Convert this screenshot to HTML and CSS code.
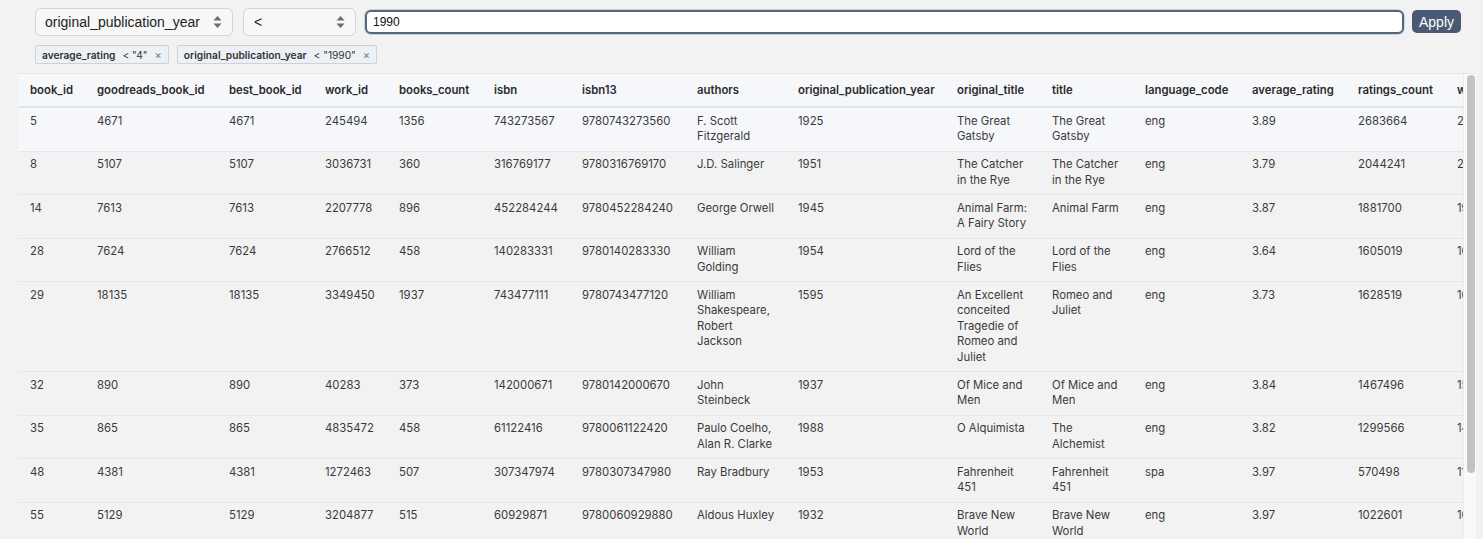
FILE: index.html
```html
<!DOCTYPE html>
<html lang="en">
<head>
<meta charset="utf-8">
<title>Books</title>
<link rel="stylesheet" href="styles.css">
</head>
<body>
<div class="toolbar">
  <div class="select sel-col"><span>original_publication_year</span><svg class="arrows" width="9" height="14" viewBox="0 0 9 14"><path d="M4.5 1 L8.5 5.5 L0.5 5.5 Z M4.5 13 L8.5 8.5 L0.5 8.5 Z" fill="#6b6b6b"/></svg></div>
  <div class="select sel-op"><span>&lt;</span><svg class="arrows" width="9" height="14" viewBox="0 0 9 14"><path d="M4.5 1 L8.5 5.5 L0.5 5.5 Z M4.5 13 L8.5 8.5 L0.5 8.5 Z" fill="#6b6b6b"/></svg></div>
  <div class="input">1990</div>
  <button class="apply">Apply</button>
</div>
<div class="tags">
  <span class="tag"><b>average_rating</b><span class="op">&lt; "4"</span><span class="x">×</span></span>
  <span class="tag"><b>original_publication_year</b><span class="op">&lt; "1990"</span><span class="x">×</span></span>
</div>
<div class="table-wrap">
<div class="scroller">
<table>
<colgroup>
<col style="width:67px"><col style="width:132px"><col style="width:96px"><col style="width:74px"><col style="width:95px"><col style="width:88px"><col style="width:115px"><col style="width:101px"><col style="width:159px"><col style="width:95px"><col style="width:93px"><col style="width:107px"><col style="width:106px"><col style="width:99px"><col style="width:150px"><col style="width:190px"><col style="width:90px"><col style="width:90px">
</colgroup>
<thead>
<tr><th>book_id</th><th>goodreads_book_id</th><th>best_book_id</th><th>work_id</th><th>books_count</th><th>isbn</th><th>isbn13</th><th>authors</th><th>original_publication_year</th><th>original_title</th><th>title</th><th>language_code</th><th>average_rating</th><th>ratings_count</th><th>work_ratings_count</th><th>work_text_reviews_count</th><th>ratings_1</th><th>ratings_2</th></tr>
</thead>
<tbody>
<tr class="hl"><td>5</td><td>4671</td><td>4671</td><td>245494</td><td>1356</td><td>743273567</td><td>9780743273560</td><td class="author">F. Scott Fitzgerald</td><td>1925</td><td>The Great Gatsby</td><td>The Great Gatsby</td><td>eng</td><td>3.89</td><td>2683664</td><td>2773745</td><td>51992</td><td>86236</td><td>197621</td></tr>
<tr><td>8</td><td>5107</td><td>5107</td><td>3036731</td><td>360</td><td>316769177</td><td>9780316769170</td><td class="author">J.D. Salinger</td><td>1951</td><td>The Catcher in the Rye</td><td>The Catcher in the Rye</td><td>eng</td><td>3.79</td><td>2044241</td><td>2120637</td><td>44920</td><td>109383</td><td>185520</td></tr>
<tr><td>14</td><td>7613</td><td>7613</td><td>2207778</td><td>896</td><td>452284244</td><td>9780452284240</td><td class="author">George Orwell</td><td>1945</td><td>Animal Farm: A Fairy Story</td><td>Animal Farm</td><td>eng</td><td>3.87</td><td>1881700</td><td>1982987</td><td>35472</td><td>66854</td><td>135147</td></tr>
<tr><td>28</td><td>7624</td><td>7624</td><td>2766512</td><td>458</td><td>140283331</td><td>9780140283330</td><td class="author">William Golding</td><td>1954</td><td>Lord of the Flies</td><td>Lord of the Flies</td><td>eng</td><td>3.64</td><td>1605019</td><td>1671484</td><td>26886</td><td>92779</td><td>160295</td></tr>
<tr><td>29</td><td>18135</td><td>18135</td><td>3349450</td><td>1937</td><td>743477111</td><td>9780743477120</td><td class="author">William Shakespeare, Robert Jackson</td><td>1595</td><td>An Excellent conceited Tragedie of Romeo and Juliet</td><td>Romeo and Juliet</td><td>eng</td><td>3.73</td><td>1628519</td><td>1672889</td><td>14778</td><td>57980</td><td>153179</td></tr>
<tr><td>32</td><td>890</td><td>890</td><td>40283</td><td>373</td><td>142000671</td><td>9780142000670</td><td class="author">John Steinbeck</td><td>1937</td><td>Of Mice and Men</td><td>Of Mice and Men</td><td>eng</td><td>3.84</td><td>1467496</td><td>1518741</td><td>24642</td><td>46630</td><td>110856</td></tr>
<tr><td>35</td><td>865</td><td>865</td><td>4835472</td><td>458</td><td>61122416</td><td>9780061122420</td><td class="author">Paulo Coelho, Alan R. Clarke</td><td>1988</td><td>O Alquimista</td><td>The Alchemist</td><td>eng</td><td>3.82</td><td>1299566</td><td>1403995</td><td>55781</td><td>74846</td><td>123614</td></tr>
<tr><td>48</td><td>4381</td><td>4381</td><td>1272463</td><td>507</td><td>307347974</td><td>9780307347980</td><td class="author">Ray Bradbury</td><td>1953</td><td>Fahrenheit 451</td><td>Fahrenheit 451</td><td>spa</td><td>3.97</td><td>570498</td><td>1176240</td><td>30694</td><td>28366</td><td>64289</td></tr>
<tr><td>55</td><td>5129</td><td>5129</td><td>3204877</td><td>515</td><td>60929871</td><td>9780060929880</td><td class="author">Aldous Huxley</td><td>1932</td><td>Brave New World</td><td>Brave New World</td><td>eng</td><td>3.97</td><td>1022601</td><td>1078000</td><td>21979</td><td>23902</td><td>59463</td></tr>
<tr><td>67</td><td>1934</td><td>1934</td><td>3244642</td><td>1705</td><td>451529308</td><td>9780451529300</td><td class="author">Louisa May Alcott</td><td>1868</td><td>Little Women</td><td>Little Women</td><td>eng</td><td>3.99</td><td>1257121</td><td>1314293</td><td>17090</td><td>28745</td><td>64295</td></tr>
</tbody>
</table>
</div>
<div class="vscroll"><div class="thumb"></div></div>
</div>
</body>
</html>
```
FILE: styles.css
```css
html, body {
  margin: 0;
  padding: 0;
  background: #f2f2f2;
  overflow: hidden;
  height: 100%;
}
body {
  font-family: Inter, "Noto Sans", sans-serif;
  color: #333;
}
.toolbar {
  display: flex;
  align-items: center;
  padding: 8px 22px 0 35px;
  height: 28px;
}
.select {
  box-sizing: border-box;
  height: 28px;
  display: flex;
  align-items: center;
  justify-content: space-between;
  background: #f7f7f7;
  border: 1px solid #d4d4d4;
  border-radius: 6px;
  font-family: "Liberation Sans", Arial, sans-serif;
  font-size: 14px;
  color: #222;
  padding: 0 10px 0 9px;
}
.sel-col { width: 198px; margin-right: 10px; }
.sel-op { width: 113px; margin-right: 9px; padding-left: 10px; }
.arrows { flex: none; }
.input {
  box-sizing: border-box;
  flex: 1;
  height: 24px;
  border: 2px solid #55657b;
  border-radius: 6px;
  box-shadow: 0 0 0 1px #cbd1d9;
  background: #fff;
  font-family: "Liberation Sans", Arial, sans-serif;
  font-size: 12px;
  color: #111;
  padding: 0 6px;
  display: flex;
  align-items: center;
  margin-right: 8px;
}
.apply {
  box-sizing: border-box;
  height: 23px;
  width: 49px;
  border: none;
  border-radius: 5px;
  background: #4a5a73;
  color: #fff;
  font-family: "Liberation Sans", Arial, sans-serif;
  font-size: 14px;
  padding: 0;
  margin-top: -1px;
}
.tags {
  display: flex;
  gap: 8px;
  padding: 9px 0 0 35px;
  height: 19px;
}
.tag {
  box-sizing: border-box;
  height: 19px;
  display: flex;
  align-items: center;
  background: #edf1f5;
  border: 1px solid #c9d3de;
  border-radius: 2px;
  padding: 0 6px;
  font-size: 10.2px;
  color: #333;
}
.tag b { font-weight: 600; }
.tag .op { margin-left: 7px; }
.tag .x { margin-left: 7px; color: #777; font-size: 11px; }
.table-wrap {
  margin: 9px 7px 0 18px;
  height: 480px;
  display: flex;
  border-top: 1px solid #e4e9ee;
  box-sizing: border-box;
}
.scroller {
  flex: 1;
  min-width: 0;
  overflow: hidden;
}
.vscroll {
  flex: none;
  width: 13px;
  background: #f9f9f9;
  border-left: 1px solid #ececec;
  padding: 1px 2px 0 3px;
  box-sizing: border-box;
}
.thumb {
  width: 8px;
  height: 398px;
  background: #c2c2c2;
  border-radius: 4px;
}
table {
  table-layout: fixed;
  border-collapse: collapse;
  width: 1947px;
  font-size: 11.35px;
}
th {
  text-align: left;
  font-weight: 600;
  color: #2b2b2b;
  background: #f5f7fa;
  padding: 9px 12px 8px;
  line-height: 15px;
  white-space: nowrap;
  overflow: hidden;
  border-bottom: 2px solid #dde5ee;
}
td {
  vertical-align: top;
  padding: 5.75px 12px;
  line-height: 15.5px;
  color: #3a3a3a;
  border-bottom: 1px solid #e0e7ef;
}
td.author { padding-right: 8px; }
tr.hl td { background: #f5f7fa; }
```
